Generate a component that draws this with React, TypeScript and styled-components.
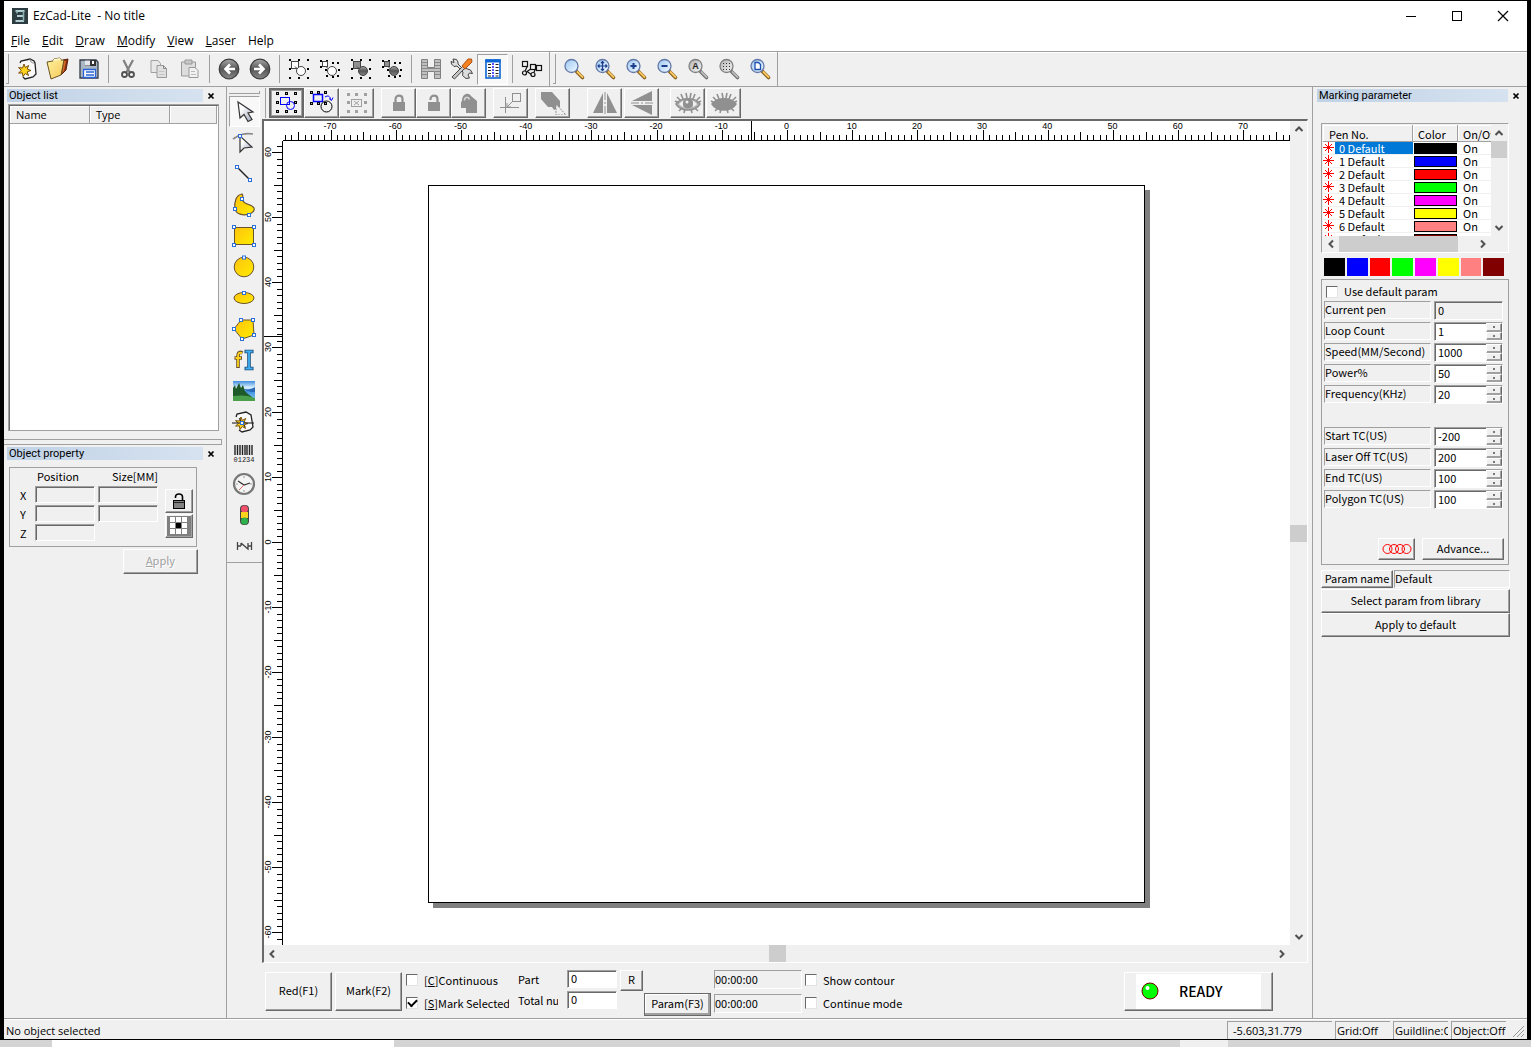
import React from "react";
import styled, { createGlobalStyle, css } from "styled-components";

/* ---------- tokens ---------- */

const face = "#f0f0f0";
const shade = "#a0a0a0";
const dark = "#696969";
const uiFont = `"Open Sans", "Noto Sans", sans-serif`;
const gothic = `"Noto Sans CJK JP", "Liberation Sans", sans-serif`;

const Global = createGlobalStyle`
  * { box-sizing: border-box; }
  body { margin: 0; background: #000; color: #000; font: 11px/14px ${gothic}; }
  button, input { font: inherit; color: inherit; border-radius: 0; margin: 0; }
  button { padding: 0; cursor: default; }
  svg { display: block; }
`;

const raised = css`
  border: 1px solid;
  border-color: #fff ${dark} ${dark} #fff;
  box-shadow: inset -1px -1px 0 ${shade};
  background: ${face};
`;
const sunken = css`
  border: 1px solid;
  border-color: ${shade} #fff #fff ${shade};
`;
const deep = css`
  border: 1px solid;
  border-color: ${shade} #fff #fff ${shade};
  box-shadow: inset 1px 1px 0 ${dark};
`;

/* ---------- window ---------- */

const Screen = styled.div`
  display: flex;
  flex-direction: column;
  height: 100vh;
  min-height: 760px;
`;
const Window = styled.div`
  flex: 1;
  min-height: 0;
  display: flex;
  flex-direction: column;
  margin: 1px 4px;
  background: ${face};
`;
const TitleBar = styled.header`
  display: flex;
  align-items: center;
  height: 29px;
  padding-left: 8px;
  gap: 5px;
  background: #fff;
  font: 12px/16px ${uiFont};
`;
const Title = styled.h1`
  flex: 1;
  margin: 0;
  font: inherit;
  white-space: pre;
`;
const CaptionButtons = styled.div`
  display: flex;
  margin-right: 1px;
`;
const CaptionButton = styled.button`
  width: 46px;
  height: 29px;
  display: grid;
  place-items: center;
  border: 0;
  background: none;
`;
const MenuBar = styled.nav`
  display: flex;
  height: 21px;
  padding-left: 1px;
  background: #fff;
  font: 12px/22px ${uiFont};
`;
const MenuItem = styled.button`
  border: 0;
  background: none;
  padding: 0 6px;
`;
const ToolbarRow = styled.div`
  display: flex;
  align-items: stretch;
  height: 36px;
  border-top: 1px solid ${shade};
  border-bottom: 1px solid ${shade};
  box-shadow: inset 0 1px 0 #fff;
`;
const Grip = styled.span`
  width: 3px;
  margin: 2px 2px;
  border-right: 1px solid ${shade};
  border-bottom: 1px solid ${shade};
`;
const Sep = styled.span`
  width: 1px;
  margin: 3px 3px 3px 4px;
  background: ${shade};
`;
const BandEnd = styled.span`
  width: 1px;
  margin: 0 1px 0 2px;
  background: ${shade};
`;
const Tool = styled.button<{ $on?: boolean }>`
  width: 31px;
  height: 31px;
  align-self: center;
  display: grid;
  place-items: center;
  border: 1px solid transparent;
  background: none;
  ${(p) => p.$on && css`border-color: ${shade} #fff #fff ${shade}; background: #f8f8f8;`}
`;
const Body = styled.div`
  flex: 1;
  min-height: 0;
  display: flex;
`;

/* ---------- docks ---------- */

const LeftDock = styled.aside`
  width: 222px;
  display: flex;
  flex-direction: column;
`;
const RightDock = styled.aside`
  width: 215px;
  border-left: 1px solid ${shade};
`;
const DockTitle = styled.div<{ $left: number }>`
  display: flex;
  align-items: center;
  margin: 2px 0 0 ${(p) => p.$left}px;
  height: 13px;
`;
const DockName = styled.h2<{ $w: number }>`
  width: ${(p) => p.$w}px;
  margin: 0;
  padding-left: 2px;
  background: linear-gradient(90deg, #c0d2e6, #d6e2f0);
  font: 11px/13px Roboto, ${uiFont};
`;
const DockClose = styled.button`
  width: 16px;
  height: 13px;
  display: grid;
  place-items: center;
  border: 0;
  background: none;
`;
const ObjectList = styled.div`
  width: 211px;
  height: 327px;
  margin: 2px 0 0 4px;
  padding: 1px;
  ${deep}
  border-color: ${shade};
  background: #fff;
`;
const Table = styled.table`
  width: 100%;
  table-layout: fixed;
  border-collapse: separate;
  border-spacing: 0;
`;
const HeadCell = styled.th<{ $w?: number; $h: number; $pad: number }>`
  width: ${(p) => (p.$w ? p.$w + "px" : "auto")};
  height: ${(p) => p.$h}px;
  padding: 0 0 0 ${(p) => p.$pad}px;
  font-weight: 400;
  text-align: left;
  white-space: nowrap;
  overflow: hidden;
  background: ${face};
  box-shadow: inset -1px -1px 0 ${shade}, inset 1px 1px 0 #fff;
`;
const UiHead = styled.thead`
  font: 11px/14px ${uiFont};
`;
const Splitter = styled.div`
  height: 6px;
  margin: 8px 4px 0 0;
  border-top: 1px solid ${shade};
  border-bottom: 1px solid ${shade};
  border-right: 1px solid ${shade};
`;
const PropertyBox = styled.div`
  display: flex;
  width: 188px;
  margin: 7px 0 0 5px;
  padding: 2px 3px 5px 10px;
  border: 1px solid ${shade};
`;
const PropertyGrid = styled.div`
  flex: 1;
  display: grid;
  grid-template-columns: 12px 60px 60px;
  grid-template-rows: 14px repeat(3, 17px);
  gap: 2px 3px;
  line-height: 18px;
`;
const HeadText = styled.span<{ $pad: number }>`
  padding-left: ${(p) => p.$pad}px;
  line-height: 12px;
  white-space: nowrap;
`;
const FlatInput = styled.input`
  min-width: 0;
  width: 100%;
  height: 17px;
  padding: 0 3px;
  background: ${face};
  ${deep}
`;
const SideButtons = styled.div`
  display: grid;
  align-content: start;
  gap: 1px;
  padding-top: 19px;
`;
const SquareButton = styled.button`
  width: 28px;
  height: 24px;
  display: grid;
  place-items: center;
  ${raised}
`;
const Push = styled.button<{ $w?: number; $h: number; $default?: boolean }>`
  width: ${(p) => (p.$w ? p.$w + "px" : "100%")};
  height: ${(p) => p.$h}px;
  padding-bottom: 3px;
  display: grid;
  place-items: center;
  white-space: nowrap;
  ${raised}
  ${(p) => p.$default && css`border-color: ${dark}; box-shadow: inset -2px -2px 0 ${shade}, inset 1px 1px 0 #fff;`}
  &:disabled { color: ${shade}; text-shadow: 1px 1px 0 #fff; }
`;
const IconPush = styled(Push)`
  padding-bottom: 0;
`;
const ApplyRow = styled.div`
  display: flex;
  margin: 2px 0 0 119px;
`;

/* ---------- drawing column ---------- */

const ToolColumn = styled.div`
  width: 36px;
  border-left: 1px solid ${shade};
`;
const ToolStack = styled.div`
  display: flex;
  flex-direction: column;
  align-items: center;
  padding: 4px 1px 0 0;
  border-bottom: 1px solid ${shade};
  height: 476px;
`;
const StackGrip = styled.span`
  width: 31px;
  height: 3px;
  margin-bottom: 2px;
  border-bottom: 1px solid ${shade};
  border-right: 1px solid ${shade};
`;
const Center = styled.main`
  flex: 1;
  min-width: 0;
  display: flex;
  flex-direction: column;
`;
const EditBar = styled.div`
  display: flex;
  height: 32px;
  padding: 1px 0 0 3px;
`;
const EditGrip = styled.span`
  width: 2px;
  height: 30px;
  margin-right: 2px;
  border-left: 1px solid ${shade};
`;
const EditGroup = styled.div<{ $gap: number; $after: number }>`
  display: flex;
  gap: ${(p) => p.$gap}px;
  margin-right: ${(p) => p.$after}px;
`;
const EditButton = styled.button<{ $on?: boolean }>`
  width: 35px;
  height: 30px;
  display: grid;
  place-items: center;
  ${raised}
  ${(p) => p.$on && css`border: 2px solid ${dark}; box-shadow: inset 0 0 0 1px ${shade};`}
`;
const View = styled.section`
  flex: 1;
  min-height: 0;
  margin-right: 4px;
  display: grid;
  grid-template-columns: 19px minmax(0, 1fr) 17px;
  grid-template-rows: 20px minmax(0, 1fr) 17px;
  border-style: solid;
  border-width: 2px 1px 1px 2px;
  border-color: ${dark} #fff #fff ${dark};
  background: #fff;
`;
const TopRuler = styled.svg`
  width: 100%;
  height: 20px;
  border-bottom: 1px solid #000;
`;
const SideRuler = styled.svg`
  width: 19px;
  height: 100%;
  border-right: 1px solid #000;
`;
const Canvas = styled.div`
  display: flex;
  align-items: center;
  justify-content: center;
  padding-top: 2px;
  overflow: hidden;
`;
const Sheet = styled.div`
  flex: none;
  width: 717px;
  height: 718px;
  border: 1px solid #000;
  background: #fff;
  box-shadow: 5px 5px 0 #808080;
`;
const Track = styled.div<{ $vertical?: boolean }>`
  display: flex;
  flex-direction: ${(p) => (p.$vertical ? "column" : "row")};
  background: ${face};
`;
const VTrack = styled(Track)`
  grid-column: 3;
  grid-row: 1 / 3;
`;
const HTrack = styled(Track)`
  grid-column: 1 / 3;
`;
const Fill = styled.span<{ $grow?: number }>`
  flex: ${(p) => p.$grow ?? 1};
`;
const Thumb = styled.span<{ $size: number }>`
  flex: none;
  flex-basis: ${(p) => p.$size}px;
  background: #cdcdcd;
`;
const ArrowButton = styled.button`
  flex: none;
  min-width: 16px;
  min-height: 16px;
  display: grid;
  place-items: center;
  border: 0;
  background: none;
`;

/* ---------- marking bar ---------- */

const MarkBar = styled.div`
  display: flex;
  align-items: flex-start;
  height: 55px;
  padding: 7px 39px 0 3px;
`;
const MarkButtons = styled.div`
  display: flex;
  gap: 3px;
  padding-top: 2px;
  margin-right: 4px;
`;
const Checks = styled.div`
  display: grid;
  gap: 3px;
  width: 103px;
  overflow: hidden;
`;
const CheckLabel = styled.label`
  display: flex;
  align-items: center;
  gap: 6px;
  height: 20px;
  white-space: nowrap;
  & > span { padding-bottom: 1px; }
`;
const Box = styled.input.attrs({ type: "checkbox" })`
  appearance: none;
  flex: none;
  width: 12px;
  height: 12px;
  display: grid;
  place-items: center;
  background: #fff;
  border: 1px solid;
  border-color: ${dark} #e3e3e3 #e3e3e3 ${dark};
  &:checked::after {
    content: "";
    width: 7px;
    height: 4px;
    margin-top: -2px;
    border: solid #000;
    border-width: 0 0 2px 2px;
    transform: rotate(-45deg);
  }
`;
const NumberBox = styled.input`
  width: 50px;
  height: 18px;
  padding: 0 3px 2px;
  background: #fff;
  ${deep}
`;
const CountRow = styled.div`
  display: flex;
  gap: 9px;
  height: 19px;
`;
const CountStack = styled.div`
  display: grid;
  gap: 2px;
  width: 99px;
  margin: 0 3px 0 9px;
`;
const ClipLabel = styled.label`
  width: 40px;
  line-height: 18px;
  overflow: hidden;
  white-space: nowrap;
`;
const Stair = styled.div`
  display: flex;
  align-items: flex-start;
  margin-right: 3px;
`;
const ParamSlot = styled.div`
  padding: 23px 0 0 1px;
`;
const Times = styled.div`
  display: grid;
  gap: 5px;
  width: 88px;
  margin-right: 3px;
`;
const TimeBox = styled.output`
  height: 19px;
  line-height: 16px;
  ${sunken}
`;
const ReadyButton = styled.button`
  width: 149px;
  height: 39px;
  margin: 2px 0 0 auto;
  padding: 1px 11px;
  ${raised}
`;
const ReadyFace = styled.span`
  display: flex;
  align-items: center;
  gap: 20px;
  height: 35px;
  padding: 0 0 1px 5px;
  background: #fff;
  font: 500 14px/20px ${gothic};
`;

/* ---------- marking parameters ---------- */

const RightInner = styled.div`
  width: 189px;
  margin-left: 8px;
`;
const PenList = styled.div`
  width: 188px;
  height: 130px;
  margin-top: 21px;
  padding: 1px 1px 0 1px;
  display: grid;
  grid-template-columns: minmax(0, 1fr) 16px;
  grid-template-rows: minmax(0, 1fr) 16px;
  ${sunken}
`;
const PenClip = styled.div`
  overflow: hidden;
  background: #fff;
`;
const PenTable = styled(Table)`
  width: 190px;
`;
const PenCell = styled.td`
  height: 13px;
  padding: 0;
  line-height: 12px;
  border-bottom: 1px solid #f0f0f0;
`;
const PenName = styled.div<{ $on: boolean }>`
  display: flex;
  height: 12px;
  line-height: 12px;
  & > span {
    flex: 1;
    padding-left: 4px;
    white-space: pre;
    ${(p) => p.$on && css`background: #0078d7; color: #fff;`}
  }
`;
const PenColor = styled.div<{ $c: string }>`
  height: 11px;
  margin: 1px 1px 0 1px;
  border: 1px solid #000;
  background: ${(p) => p.$c};
`;
const OnText = styled.div`
  height: 12px;
  padding-left: 5px;
  line-height: 12px;
`;
const Palette = styled.div`
  display: grid;
  grid-template-columns: repeat(8, 1fr);
  gap: 2px;
  width: 180px;
  margin: 5px 0 3px 3px;
`;
const Swatch = styled.button<{ $c: string }>`
  height: 18px;
  border: 0;
  background: ${(p) => p.$c};
`;
const ParamBox = styled.div`
  width: 188px;
  height: 286px;
  padding: 2px 5px 4px 2px;
  display: flex;
  flex-direction: column;
  border: 1px solid ${shade};
  & > ${CheckLabel} { height: 19px; padding-left: 2px; }
`;
const ParamRow = styled.div<{ $gapAfter?: boolean }>`
  display: flex;
  justify-content: space-between;
  height: 21px;
  margin-bottom: ${(p) => (p.$gapAfter ? 21 : 0)}px;
`;
const ParamLabel = styled.label`
  width: 107px;
  height: 18px;
  line-height: 15px;
  white-space: nowrap;
  ${sunken}
`;
const SpinBox = styled.div<{ $flat?: boolean }>`
  display: flex;
  width: 69px;
  height: 19px;
  ${deep}
  background: ${(p) => (p.$flat ? face : "#fff")};
  & > input {
    flex: 1;
    min-width: 0;
    padding: 0 0 2px 3px;
    border: 0;
    background: none;
  }
`;
const SpinButtons = styled.span`
  width: 16px;
  display: grid;
  grid-template-rows: 1fr 1fr;
`;
const SpinButton = styled.button`
  display: grid;
  place-items: center;
  ${raised}
  border-color: #fff ${dark} ${shade} #fff;
`;
const BoxFooter = styled.div`
  display: flex;
  justify-content: flex-end;
  gap: 7px;
  margin: auto -1px 0 0;
`;
const NameRow = styled.div`
  display: flex;
  gap: 1px;
  margin: 5px 0 1px;
`;
const NameBox = styled.output`
  flex: 1;
  height: 18px;
  line-height: 15px;
  ${sunken}
`;

/* ---------- status ---------- */

const Status = styled.footer`
  display: flex;
  align-items: center;
  gap: 3px;
  height: 21px;
  padding: 2px 2px 0 2px;
  border-top: 1px solid ${shade};
  box-shadow: inset 0 1px 0 #fff;
  font: 11px/17px ${uiFont};
`;
const StatusText = styled.span`
  flex: 1;
`;
const StatusCell = styled.span<{ $w: number; $pad: number }>`
  width: ${(p) => p.$w}px;
  height: 18px;
  padding-left: ${(p) => p.$pad}px;
  overflow: hidden;
  white-space: nowrap;
  border-left: 1px solid ${shade};
  border-top: 1px solid ${shade};
`;
const Desktop = styled.div`
  display: flex;
  flex: none;
  justify-content: space-between;
  height: 7px;
  padding: 0 303px 0 52px;
  background: #d4d4d4;
`;
const DesktopPart = styled.span<{ $w: number; $c: string }>`
  width: ${(p) => p.$w}px;
  background: ${(p) => p.$c};
`;

/* ---------- icons ---------- */

type IcoProps = { children?: React.ReactNode; w?: number; h?: number };
const Ico = ({ children, w = 24, h = 24 }: IcoProps) => (
  <svg width={w} height={h} viewBox={`0 0 ${w} ${h}`} fill="none" aria-hidden="true">
    {children}
  </svg>
);

const Gradients = () => (
  <svg width="0" height="0" aria-hidden="true">
    <defs>
      <linearGradient id="gold" x1="0" y1="0" x2="1" y2="1">
        <stop offset="0" stopColor="#ffc20e" />
        <stop offset="1" stopColor="#ffec00" />
      </linearGradient>
      <linearGradient id="lens" x1="0" y1="0" x2="1" y2="1">
        <stop offset="0" stopColor="#9cc8f2" />
        <stop offset="1" stopColor="#f2faff" />
      </linearGradient>
      <linearGradient id="lensGrey" x1="0" y1="0" x2="1" y2="1">
        <stop offset="0" stopColor="#b0b0b0" />
        <stop offset="1" stopColor="#f8f8f8" />
      </linearGradient>
      <linearGradient id="ball" x1="0" y1="0" x2="0" y2="1">
        <stop offset="0" stopColor="#a8a8a8" />
        <stop offset="0.5" stopColor="#555" />
        <stop offset="1" stopColor="#888" />
      </linearGradient>
      <linearGradient id="folder" x1="0" y1="0" x2="1" y2="1">
        <stop offset="0" stopColor="#fff3a0" />
        <stop offset="1" stopColor="#f6c858" />
      </linearGradient>
      <linearGradient id="arrow" x1="0" y1="0" x2="1" y2="1">
        <stop offset="0.3" stopColor="#fff" />
        <stop offset="1" stopColor="#9aa0b8" />
      </linearGradient>
      <linearGradient id="sky" x1="0" y1="0" x2="0" y2="1">
        <stop offset="0" stopColor="#3f8fe0" />
        <stop offset="0.35" stopColor="#e4f6ff" />
        <stop offset="0.5" stopColor="#3f8fe0" />
        <stop offset="1" stopColor="#8cd0f0" />
      </linearGradient>
    </defs>
  </svg>
);

const Dots = ({ at, s = 2, c = "#000" }: { at: number[][]; s?: number; c?: string }) => (
  <g fill={c}>
    {at.map(([x, y]) => (
      <rect key={x + "," + y} x={x} y={y} width={s} height={s} />
    ))}
  </g>
);
const Handle = ({ x, y }: { x: number; y: number }) => (
  <rect x={x - 1.5} y={y - 1.5} width="3" height="3" fill="#fff" stroke="#2a70d8" />
);
const frame = (a: number, m: number, b: number) => [
  [a, a], [m, a], [b, a], [a, m], [b, m], [a, b], [m, b], [b, b],
];

const Star = () => (
  <path
    d="M9 7l1.300 3.400 3.400-1.900-1.500 3.500 3.800 1.500-3.700 1.300 1.200 3.700-3.200-2-2.300 3-.7-3.700-3.700.4 2.700-2.900-2.800-2.700 4 .4z"
    fill="#ffd21c"
    stroke="#6a4200"
    strokeWidth="0.900"
  />
);
const NewIcon = () => (
  <Ico>
    <path d="M6 4l9-2 4 2 1 2 1 11-3 3-8 2-3-4z" fill="#fafafa" />
    <path d="M5 6l1-2 9-2 4 2 1 2 1 11-3 3-8 2-2-2" stroke="#222" strokeWidth="1.300" />
    <path d="M15 2c0 3 2 4 4 4" stroke="#888" />
    <Star />
  </Ico>
);
const OpenIcon = () => (
  <Ico>
    <path d="M17 3l5-1-2 11-5 5z" fill="#8c2f10" stroke="#5c2008" />
    <path d="M18 4l2 0-2 10-2 2z" fill="#d06a28" />
    <path d="M1 5l6-1 1-2 6-1 1 2 3 0-3 15-10 4z" fill="url(#folder)" stroke="#6a5420" />
    <path d="M7 4l1-2 6-1 1 2" fill="#fff8c8" />
  </Ico>
);
const SaveIcon = () => (
  <Ico>
    <path d="M3 3h16l2 2v16H3z" fill="#a9b6c4" stroke="#333c46" strokeWidth="1.300" />
    <path d="M8 3h11v6H8z" fill="#333" />
    <path d="M8 3.500h5v5H8z" fill="#e4e8ee" />
    <path d="M15 4h2v3h-2z" fill="#fff" />
    <path d="M6.500 12.500h12v8h-12z" fill="#fff" stroke="#2864d8" strokeWidth="1.300" />
    <path d="M9 15h8M9 18h8" stroke="#2864d8" strokeWidth="1.500" />
  </Ico>
);
const CutIcon = () => (
  <Ico>
    <path d="M7.500 3l6 12M17 3l-6.500 12" stroke="#808080" strokeWidth="2.200" />
    <circle cx="8.500" cy="17.500" r="2.500" stroke="#505050" strokeWidth="1.800" />
    <circle cx="15.500" cy="17.500" r="2.500" stroke="#505050" strokeWidth="1.800" />
  </Ico>
);
const CopyIcon = () => (
  <Ico>
    <path d="M4 3.500h7l2.500 3v9H4z" fill="#e8e8e8" stroke="#a0a0a0" />
    <path d="M10 8.500h6.500l3 3v9H10z" fill="#e0e0e0" stroke="#999" />
    <path d="M16.500 8.500v3h3" stroke="#888" />
    <path d="M12 14.500h5.500M12 17.500h5.500" stroke="#c4c4c4" />
  </Ico>
);
const PasteIcon = () => (
  <Ico>
    <path d="M3.500 5h14v14h-14z" fill="#ddd" stroke="#999" />
    <path d="M7 3h7v4H7z" fill="#c8c8c8" stroke="#999" />
    <path d="M11 10.500h6l3 3v7h-9z" fill="#f2f2f2" stroke="#999" />
    <path d="M13 14.500h4M13 17.500h5" stroke="#bbb" />
  </Ico>
);
const NavIcon = ({ flip }: { flip?: boolean }) => (
  <Ico>
    <circle cx="12" cy="12" r="9.800" fill="url(#ball)" stroke="#3c3c3c" strokeWidth="1.200" />
    <path
      d={flip ? "M6 12h9M11 7.500l4.500 4.500-4.500 4.500" : "M18 12H9M13 7.500L8.500 12l4.500 4.500"}
      stroke="#fff"
      strokeWidth="2.600"
    />
  </Ico>
);
const PickIcon = ({ filled, small }: { filled?: boolean; small?: boolean }) => {
  const dots = small
    ? [[2, 3], [8, 3], [2, 9], [14, 5], [19, 5], [7, 12], [20, 12], [8, 18], [14, 19], [19, 18]]
    : frame(2, 11, 20);
  return (
    <Ico>
      <Dots at={dots} />
      <rect x="4.500" y="4.500" width={small ? 5 : 7} height={small ? 5 : 7} fill={filled ? "#909090" : "#fff"} stroke="#444" />
      <path d="M8 9.500l3 3" stroke="#444" />
      <circle cx="14" cy="14" r="4.500" fill={filled ? "url(#ball)" : "#fff"} stroke="#444" />
    </Ico>
  );
};
const HatchIcon = () => (
  <Ico>
    <path d="M2.500 2.500h6v8h7v-8h6v19h-6v-7h-7v7h-6z" fill="#c0c0c0" stroke="#808080" />
    <path d="M3 5.500h5M3 8.500h5M3 11.500h18M3 14.500h5M3 17.500h5M16 5.500h5M16 8.500h5M16 14.500h5M16 17.500h5" stroke="#888" />
  </Ico>
);
const ToolsIcon = () => (
  <Ico>
    <path d="M3 2l3.500.5L8 5v2l5 5 3-.5 4.500 1.500 2 3.500-3-.5-1.500 2 1.500 3-3.500.5-3.500-3 .5-3.500-6-6-3 .5L1.500 7 1 4.500l3 1z" fill="#ddd" stroke="#444" />
    <path d="M2 20L12.500 9.500l2 2L4.500 22z" fill="#c8c8c8" stroke="#444" />
    <path d="M12 9l6-7 3.500 0 .5 3-7 7z" fill="#f58220" stroke="#b05010" />
  </Ico>
);
const PanelIcon = () => (
  <Ico>
    <rect x="5" y="3" width="14" height="18" fill="#fff" stroke="#0a64d2" strokeWidth="1.600" />
    <path d="M4.500 4h15" stroke="#0a64d2" strokeWidth="3" />
    <path d="M7 7.500h3M7 10.500h3M7 13.500h3M7 16.500h3M14.500 7.500h3M14.500 10.500h3M14.500 13.500h3M14.500 16.500h3M14.500 19h3M7 19h3" stroke="#222" />
    <path d="M12 6v14" stroke="#2020ff" strokeDasharray="2 1" strokeWidth="1.500" />
  </Ico>
);
const NodesIcon = () => (
  <Ico>
    <g stroke="#111" strokeWidth="1.200">
      <rect x="2.500" y="4.500" width="5" height="5" />
      <rect x="10.500" y="7.500" width="5" height="5" />
      <rect x="16.500" y="8.500" width="5" height="5" />
      <circle cx="4.500" cy="16" r="2" />
      <circle cx="13" cy="17.500" r="2" />
      <path d="M7 10l-2 4M10 12.500l-3 2 3 2 1 1M15 12.500l-1 3" />
    </g>
  </Ico>
);
const Lens = ({ grey, children }: { grey?: boolean; children?: React.ReactNode }) => (
  <Ico>
    <path d="M14.500 14.500l6 6" stroke={grey ? "#707070" : "#8a6020"} strokeWidth="3.600" strokeLinecap="round" />
    <path d="M15.500 15l5 5" stroke={grey ? "#bbb" : "#f8c860"} strokeWidth="1.800" strokeLinecap="round" />
    <circle cx="9.500" cy="9" r="6.500" fill={grey ? "url(#lensGrey)" : "url(#lens)"} stroke={grey ? "#808080" : "#6478a8"} strokeWidth="1.300" />
    {children}
  </Ico>
);

const HandleDots = ({ at }: { at: number[][] }) => (
  <g fill="#aaa" stroke="#000">
    {at.map(([x, y]) => (
      <rect key={x + "," + y} x={x + 0.5} y={y + 0.5} width="2" height="2" />
    ))}
  </g>
);
const SelectIcon = () => (
  <Ico>
    <HandleDots at={frame(1, 10, 19)} />
    <rect x="5.500" y="6.500" width="9" height="7" stroke="#00f" />
    <circle cx="15.500" cy="14.500" r="4" stroke="#00f" />
  </Ico>
);
const RotateIcon = () => (
  <Ico>
    <HandleDots at={[[0, 0], [7, 0], [14, 0], [0, 11], [7, 11], [14, 11]]} />
    <rect x="3.500" y="3.500" width="9" height="7" stroke="#00f" strokeWidth="1.500" />
    <circle cx="16.500" cy="15.500" r="5.500" stroke="#000" />
    <path d="M15 6c3-2 5-1 6 3M19 7.500l2.500 2L23 6.500" stroke="#00f" />
  </Ico>
);
const ClearIcon = () => (
  <Ico>
    <Dots at={frame(2, 10, 19)} s={3} c="#a0a0a0" />
    <rect x="6.500" y="8.500" width="10" height="7" stroke="#a0a0a0" />
    <path d="M9 10l5 4M14 10l-5 4" stroke="#a0a0a0" />
  </Ico>
);
const Padlock = ({ open, many }: { open?: boolean; many?: boolean }) => (
  <Ico>
    {many ? (
      <>
        <path d="M5 10c0-8 7-9 9-5l6 5v12H9v-5H4v-6z" fill="#909090" />
        <path d="M7.500 9.500c0-4 4-4 5-1" stroke="#d8d8d8" strokeWidth="1.500" />
      </>
    ) : (
      <>
        <rect x="6" y="11" width="12" height="9" fill="#909090" />
        <path d={open ? "M8.500 9V8c0-4.500 7-4.500 7 0v3" : "M8.500 12V8c0-4.500 7-4.500 7 0v4"} stroke="#909090" strokeWidth="2.200" />
      </>
    )}
  </Ico>
);
const OriginIcon = () => (
  <Ico w={26}>
    <g stroke="#909090">
      <rect x="14.500" y="2.500" width="8" height="8" />
      <path d="M2 16.500h19M7.500 6v16M14 11l-5 5M9 12v4h4" />
    </g>
  </Ico>
);
const BrushIcon = () => (
  <Ico w={31}>
    <path d="M4 1h11l8 9v6l-6 3-2-3h-4l-7-8z" fill="#909090" />
    <path d="M19 13l10 11H19z" fill={face} stroke="#909090" strokeDasharray="2 1" />
  </Ico>
);
const MirrorIcon = ({ turn }: { turn?: boolean }) => (
  <Ico>
    <g transform={turn ? "rotate(-90 12 12)" : undefined}>
      <path d="M10 2v20H0z" fill="#909090" />
      <path d="M14 2v20h10z" fill="#909090" />
      <path d="M12 1v22" stroke="#909090" strokeDasharray="8 2 2 2" />
    </g>
  </Ico>
);
const EyeIcon = ({ shut }: { shut?: boolean }) => (
  <Ico w={28}>
    <path d="M2 13c5-7 19-7 24 0-5 8-19 8-24 0z" fill={shut ? "#909090" : "#b8b8b8"} stroke="#909090" strokeWidth="1.500" />
    <path d="M3 6l4 4M7 3l2 5M12 2l1 5M17 2l-1 5M21 3l-2 5M26 6l-4 4M1 10l4 2M27 10l-4 2M5 20l3-3M10 22l1-4M18 22l-1-4M24 20l-3-3" stroke="#909090" strokeWidth="1.600" />
    <circle cx="14" cy="12.500" r="5" fill="#909090" />
    {!shut && <path d="M5 13c2-2 3-3 4-3v6c-2-1-3-2-4-3zM23 13c-2-2-3-3-4-3v6c2-1 3-2 4-3z" fill={face} />}
    {!shut && <circle cx="13" cy="11" r="1.500" fill={face} />}
  </Ico>
);

const PointerIcon = () => (
  <Ico>
    <path d="M6 2l2 16 4-3.500 4 7 4-2-4-6.500 5-1z" fill="url(#arrow)" stroke="#333" strokeWidth="1.200" />
  </Ico>
);
const NodeEditIcon = () => (
  <Ico>
    <path d="M1 8c7-5 12-6 20-5" stroke="#888" strokeWidth="1.600" />
    <path d="M8 5v16l4-4 8-1z" fill="url(#arrow)" stroke="#333" strokeWidth="1.200" />
    <Handle x={8} y={5} />
  </Ico>
);
const LineIcon = () => (
  <Ico>
    <path d="M5 5l13 13" stroke="#222" strokeWidth="1.400" />
    <Handle x={5} y={5} />
    <Handle x={18} y={18} />
  </Ico>
);
const CurveIcon = () => (
  <Ico>
    <path d="M10 1C4 2 2 9 3 16c1 5 8 7 14 5 4-1 6-4 5-6-2-4-9-3-11-7-1-2 1-5-1-7z" fill="url(#gold)" stroke="#6a5430" strokeWidth="1.200" />
    <Handle x={10} y={6} />
    <Handle x={3} y={16} />
    <Handle x={17} y={22} />
  </Ico>
);
const RectIcon = () => (
  <Ico>
    <rect x="2.500" y="3.500" width="19" height="17" fill="url(#gold)" stroke="#6a5430" />
    <Handle x={2} y={3} />
    <Handle x={22} y={3} />
    <Handle x={2} y={21} />
    <Handle x={22} y={21} />
  </Ico>
);
const CircleIcon = () => (
  <Ico>
    <circle cx="12" cy="12" r="9.800" fill="url(#gold)" stroke="#6a5430" />
    <Handle x={12} y={2.5} />
  </Ico>
);
const EllipseIcon = () => (
  <Ico>
    <ellipse cx="12" cy="12" rx="10" ry="5.500" fill="url(#gold)" stroke="#6a5430" />
    <Handle x={12} y={7} />
  </Ico>
);
const PolygonIcon = () => (
  <Ico>
    <path d="M2 12l7-9h12l1 15-12 4z" fill="url(#gold)" stroke="#6a5430" />
    <Handle x={2} y={12} />
    <Handle x={9} y={3} />
    <Handle x={21} y={3} />
    <Handle x={22} y={18} />
    <Handle x={10} y={22} />
  </Ico>
);
const TextIcon = () => (
  <Ico>
    <path d="M10.500 5c-4-2-4.500 1-4.500 4v11M2.500 10h7.500" stroke="#6a5430" strokeWidth="3.600" />
    <path d="M10 5.200c-3.500-1.500-4 1-4 3.800v10M3.500 10h5.500" stroke="#ffd21c" strokeWidth="1.800" />
    <path d="M12.500 3.500h9M12.500 20.500h9M17 3v18" stroke="#1f4f80" strokeWidth="3.600" />
    <path d="M13.500 3.500h7M13.500 20.500h7M17 3v18" stroke="#3fb0f0" strokeWidth="1.800" />
  </Ico>
);
const PictureIcon = () => (
  <Ico>
    <rect x="1" y="2" width="22" height="20" fill="url(#sky)" />
    <path d="M1 9l2-3 1 4 3-6 2 5 2-3 2 6 3 3 4 3v3H1z" fill="#1f5a2a" />
    <path d="M1 17c8-1 14-1 22 2v3H1z" fill="#4aa04a" />
    <path d="M12 10c4 1 8 0 11-2v5c-4 0-8 0-11-3z" fill="#2a68b8" />
  </Ico>
);
const VectorIcon = () => (
  <Ico>
    <path d="M6 4l9-2 4 3 2 12-3 3-8 2-4-4z" fill="#fafafa" />
    <path d="M4 7l1-3 9-2 5 3 2 12-3 3-8 2-3-2" stroke="#222" strokeWidth="1.300" />
    <Star />
    <path d="M0 13h22" stroke="#333" strokeWidth="1.200" />
    <path d="M7 8l6 9" stroke="#222" />
    <Handle x={10} y={13} />
  </Ico>
);
const BarcodeIcon = () => (
  <Ico>
    <path d="M3 4v10M5.500 4v10M8 4v10M10.500 4v10M13 4v10M15 4v10M17.500 4v10M20 4v10" stroke="#222" strokeWidth="1.400" />
    <text x="12" y="21" fontSize="7" fontFamily="Liberation Mono, monospace" textAnchor="middle" fill="#222">01234</text>
  </Ico>
);
const TimerIcon = () => (
  <Ico>
    <circle cx="12" cy="12" r="10" fill="#f4f4f4" stroke="#777" strokeWidth="2.200" />
    <path d="M6 9l6 4 6-2" stroke="#333" strokeWidth="1.300" />
    <path d="M12 13l-5 5" stroke="#d66" />
    <path d="M12 4v2M12 18v2M4 12h2M18 12h2" stroke="#999" />
  </Ico>
);
const SignalIcon = () => (
  <Ico>
    <rect x="8" y="2" width="9" height="20" rx="4" fill="#444" />
    <circle cx="12.500" cy="6" r="3.500" fill="#f0506a" />
    <rect x="9" y="9" width="7" height="6" fill="#ffd21c" />
    <circle cx="12.500" cy="18" r="3.500" fill="#2fb04a" />
  </Ico>
);
const EncoderIcon = () => (
  <Ico>
    <path d="M5.500 8v8M5 12h4M9 9v3M9 9l7 6V9M16 12h3M19.500 8v8" stroke="#444" strokeWidth="1.300" />
  </Ico>
);

const CloseGlyph = () => (
  <Ico w={8} h={8}>
    <path d="M1.500 1.500l5 5M6.500 1.500l-5 5" stroke="#000" strokeWidth="1.700" />
  </Ico>
);
const turnOf = { up: 0, right: 90, down: 180, left: 270 };
const Chevron = ({ dir }: { dir: keyof typeof turnOf }) => (
  <Ico w={10} h={10}>
    <path d="M1.500 7L5 3.500 8.500 7" stroke="#505050" strokeWidth="2" transform={`rotate(${turnOf[dir]} 5 5)`} />
  </Ico>
);
const Asterisk = () => (
  <Ico w={12} h={12}>
    <path d="M5.500 0v11M0 5.500h11M2 2l7 7M9 2l-7 7" stroke="#f00" />
  </Ico>
);

/* ---------- rulers ---------- */

const STEP_X = 6.52;
const STEP_Y = 6.5;
const tickLen = (n: number) => (n % 10 === 0 ? 10 : n % 5 === 0 ? 8 : 5);
const range = (a: number, b: number) => Array.from({ length: b - a + 1 }, (_, i) => a + i);

const HorizontalRuler = () => (
  <TopRuler aria-hidden="true">
    <svg x="50%" overflow="visible" shapeRendering="crispEdges">
      {range(-77, 77).map((n) => (
        <rect key={n} x={Math.round(n * STEP_X)} y={19 - tickLen(n)} width="1" height={tickLen(n)} />
      ))}
      {range(-7, 7).map((n) => (
        <text key={n} x={n * 10 * STEP_X} y="8" fontSize="9" fontFamily="Liberation Sans, sans-serif" textAnchor="middle">
          {n * 10}
        </text>
      ))}
      <rect x="-36" y="0" width="1" height="19" />
    </svg>
  </TopRuler>
);
const VerticalRuler = () => (
  <SideRuler aria-hidden="true">
    <svg y="50%" overflow="visible" shapeRendering="crispEdges">
      {range(-61, 61).map((n) => (
        <rect key={n} x={18 - tickLen(n)} y={Math.round(-n * STEP_Y) - 1} width={tickLen(n)} height="1" />
      ))}
      {range(-6, 6).map((n) => (
        <text
          key={n}
          transform={`translate(7 ${-n * 10 * STEP_Y - 1}) rotate(-90)`}
          fontSize="9"
          fontFamily="Liberation Sans, sans-serif"
          textAnchor="middle"
        >
          {n * 10}
        </text>
      ))}
      <rect x="0" y="-207" width="18" height="1" />
    </svg>
  </SideRuler>
);

/* ---------- data ---------- */

const pens = ["#000000", "#0000ff", "#ff0000", "#00ff00", "#ff00ff", "#ffff00", "#ff8080", "#800000"];
const params: [string, string, string, boolean?][] = [
  ["loop", "Loop Count", "1"],
  ["speed", "Speed(MM/Second)", "1000"],
  ["power", "Power%", "50"],
  ["freq", "Frequency(KHz)", "20", true],
  ["start", "Start TC(US)", "-200"],
  ["off", "Laser Off TC(US)", "200"],
  ["end", "End TC(US)", "100"],
  ["poly", "Polygon TC(US)", "100"],
];
const menus = ["File", "Edit", "Draw", "Modify", "View", "Laser"];

type Entry = [string, React.ReactNode, boolean?];
const mainGroups: Entry[][] = [
  [["New", <NewIcon />], ["Open", <OpenIcon />], ["Save", <SaveIcon />]],
  [["Cut", <CutIcon />], ["Copy", <CopyIcon />], ["Paste", <PasteIcon />]],
  [["Undo", <NavIcon />], ["Redo", <NavIcon flip />]],
  [["Combine", <PickIcon />], ["Uncombine", <PickIcon small />], ["Group", <PickIcon filled />], ["Ungroup", <PickIcon filled small />]],
  [["Hatch", <HatchIcon />], ["System parameter", <ToolsIcon />], ["Object list", <PanelIcon />, true]],
  [["Snap", <NodesIcon />]],
];
const zooms: Entry[] = [
  ["Zoom window", <Lens />],
  ["Pan", <Lens><path d="M9.500 4.500v9M5 9h9M8 6l1.500-1.500L11 6M8 12l1.500 1.500L11 12M6.500 7.500L5 9l1.500 1.500M12.500 7.500L14 9l-1.500 1.500" stroke="#1c3c8c" strokeWidth="1.200" /></Lens>],
  ["Zoom in", <Lens><path d="M9.500 6v6M6.500 9h6" stroke="#1c3c8c" strokeWidth="2" /></Lens>],
  ["Zoom out", <Lens><path d="M6.500 9h6" stroke="#1c3c8c" strokeWidth="2" /></Lens>],
  ["Zoom all", <Lens grey><text x="9.500" y="12" fontSize="9" fontWeight="700" fontFamily="Liberation Sans, sans-serif" textAnchor="middle" fill="#222">A</text></Lens>],
  ["Zoom selection", <Lens grey><Dots at={[[6, 6], [9, 6], [12, 6], [6, 9], [9, 9], [12, 9], [6, 12], [9, 12], [12, 12]]} s={1} c="#333" /></Lens>],
  ["Zoom page", <Lens><path d="M7 5.500h3.500l2 2v5H7z" fill="#fff" stroke="#1c50b0" strokeWidth="1.300" /></Lens>],
];
const editGroups: { gap: number; after: number; items: Entry[] }[] = [
  { gap: 0, after: 7, items: [["Pick", <SelectIcon />, true], ["Rotate", <RotateIcon />], ["Clear", <ClearIcon />]] },
  { gap: 0, after: 7, items: [["Lock", <Padlock />], ["Unlock", <Padlock open />], ["Unlock all", <Padlock many />]] },
  { gap: 0, after: 7, items: [["Put to origin", <OriginIcon />]] },
  { gap: 0, after: 17, items: [["Apply brush", <BrushIcon />]] },
  { gap: 2, after: 11, items: [["Mirror horizontally", <MirrorIcon />], ["Mirror vertically", <MirrorIcon turn />]] },
  { gap: 1, after: 0, items: [["Show", <EyeIcon />], ["Hide", <EyeIcon shut />]] },
];
const drawTools: Entry[] = [
  ["Select", <PointerIcon />, true],
  ["Edit nodes", <NodeEditIcon />],
  ["Line", <LineIcon />],
  ["Curve", <CurveIcon />],
  ["Rectangle", <RectIcon />],
  ["Circle", <CircleIcon />],
  ["Ellipse", <EllipseIcon />],
  ["Polygon", <PolygonIcon />],
  ["Text", <TextIcon />],
  ["Picture", <PictureIcon />],
  ["Vector file", <VectorIcon />],
  ["Barcode", <BarcodeIcon />],
  ["Timer", <TimerIcon />],
  ["Signal", <SignalIcon />],
  ["Encoder", <EncoderIcon />],
];

/* ---------- parts ---------- */

const ScrollBar = ({ vertical, before = 1, after = 1, size }: { vertical?: boolean; before?: number; after?: number; size: number }) => (
  <>
    <ArrowButton aria-label="Back"><Chevron dir={vertical ? "up" : "left"} /></ArrowButton>
    <Fill $grow={before} />
    <Thumb $size={size} />
    <Fill $grow={after} />
    <ArrowButton aria-label="Forward"><Chevron dir={vertical ? "down" : "right"} /></ArrowButton>
  </>
);

const LeftPanels = () => (
  <LeftDock>
    <DockTitle $left={3}>
      <DockName $w={196}>Object list</DockName>
      <DockClose aria-label="Close object list"><CloseGlyph /></DockClose>
    </DockTitle>
    <ObjectList>
      <Table>
        <UiHead>
          <tr>
            <HeadCell $w={80} $h={18} $pad={6}>Name</HeadCell>
            <HeadCell $w={80} $h={18} $pad={6}>Type</HeadCell>
            <HeadCell as="td" $h={18} $pad={0} />
          </tr>
        </UiHead>
      </Table>
    </ObjectList>
    <Splitter />
    <DockTitle $left={3}>
      <DockName $w={196}>Object property</DockName>
      <DockClose aria-label="Close object property"><CloseGlyph /></DockClose>
    </DockTitle>
    <PropertyBox>
      <PropertyGrid>
        <span />
        <HeadText $pad={2}>Position</HeadText>
        <HeadText $pad={14}>Size[MM]</HeadText>
        <label htmlFor="px">X</label>
        <FlatInput id="px" disabled />
        <FlatInput aria-label="Width" disabled />
        <label htmlFor="py">Y</label>
        <FlatInput id="py" disabled />
        <FlatInput aria-label="Height" disabled />
        <label htmlFor="pz">Z</label>
        <FlatInput id="pz" disabled />
      </PropertyGrid>
      <SideButtons>
        <SquareButton aria-label="Keep ratio">
          <Ico w={16} h={18}>
            <path d="M4.500 6V5c0-4 7-4 7 0v4" stroke="#000" strokeWidth="1.600" />
            <rect x="2.500" y="8.500" width="11" height="8" fill="#808080" stroke="#000" />
            <path d="M3 10.500h10" stroke="#222" />
          </Ico>
        </SquareButton>
        <SquareButton aria-label="Anchor point">
          <Ico w={24} h={20}>
            <rect width="24" height="20" fill="#808080" />
            {[0, 1, 2].flatMap((r) => [0, 1, 2].map((c) => (
              <rect key={r + "-" + c} x={3 + c * 6} y={1 + r * 6} width="5" height="5" fill={r === 1 && c === 1 ? "#000" : "#fff"} />
            )))}
          </Ico>
        </SquareButton>
      </SideButtons>
    </PropertyBox>
    <ApplyRow>
      <Push $w={75} $h={25} disabled><span><u>A</u>pply</span></Push>
    </ApplyRow>
  </LeftDock>
);

const MarkingPanel = () => (
  <RightDock>
    <DockTitle $left={4}>
      <DockName $w={191}>Marking parameter</DockName>
      <DockClose aria-label="Close marking parameter"><CloseGlyph /></DockClose>
    </DockTitle>
    <RightInner>
      <PenList>
        <PenClip>
          <PenTable>
            <thead>
              <tr>
                <HeadCell $w={90} $h={17} $pad={6}>Pen No.</HeadCell>
                <HeadCell $w={45} $h={17} $pad={5}>Color</HeadCell>
                <HeadCell $h={17} $pad={5}>On/Off</HeadCell>
              </tr>
            </thead>
            <tbody>
              {pens.map((c, i) => (
                <tr key={c}>
                  <PenCell>
                    <PenName $on={i === 0}><Asterisk /><span>{i + " Default"}</span></PenName>
                  </PenCell>
                  <PenCell><PenColor $c={c} /></PenCell>
                  <PenCell><OnText>On</OnText></PenCell>
                </tr>
              ))}
            </tbody>
          </PenTable>
        </PenClip>
        <Track $vertical><ScrollBar vertical size={17} before={0} after={1} /></Track>
        <Track><ScrollBar size={119} before={0} after={1} /></Track>
      </PenList>
      <Palette>
        {pens.map((c, i) => <Swatch key={c} $c={c} aria-label={"Pen " + i} />)}
      </Palette>
      <ParamBox>
        <CheckLabel><Box /><span>Use default param</span></CheckLabel>
        <ParamRow>
          <ParamLabel htmlFor="current">Current pen</ParamLabel>
          <SpinBox $flat><input id="current" defaultValue="0" readOnly /></SpinBox>
        </ParamRow>
        {params.map(([id, name, value, gap]) => (
          <ParamRow key={id} $gapAfter={gap}>
            <ParamLabel htmlFor={id}>{name}</ParamLabel>
            <SpinBox>
              <input id={id} defaultValue={value} />
              <SpinButtons>
                <SpinButton aria-label={name + " up"}><Ico w={4} h={4}><path d="M1 2h2" stroke="#000" /></Ico></SpinButton>
                <SpinButton aria-label={name + " down"}><Ico w={4} h={4}><path d="M1 2h2" stroke="#000" /></Ico></SpinButton>
              </SpinButtons>
            </SpinBox>
          </ParamRow>
        ))}
        <BoxFooter>
          <IconPush $w={37} $h={22} aria-label="Wobble">
            <Ico w={30} h={12}>
              {[5.5, 12, 18, 24.5].map((x) => <circle key={x} cx={x} cy="6" r="4.500" stroke="#f00" />)}
            </Ico>
          </IconPush>
          <Push $w={82} $h={22}>Advance...</Push>
        </BoxFooter>
      </ParamBox>
      <NameRow>
        <Push $w={72} $h={18}>Param name</Push>
        <NameBox>Default</NameBox>
      </NameRow>
      <Push $h={24}>Select param from library</Push>
      <Push $h={24}><span>Apply to <u>d</u>efault</span></Push>
    </RightInner>
  </RightDock>
);

const MarkingBar = () => (
  <MarkBar>
    <MarkButtons>
      <Push $w={67} $h={39}>Red(F1)</Push>
      <Push $w={67} $h={39}>Mark(F2)</Push>
    </MarkButtons>
    <Checks>
      <CheckLabel><Box /><span>[<u>C</u>]Continuous</span></CheckLabel>
      <CheckLabel><Box defaultChecked /><span>[<u>S</u>]Mark Selected</span></CheckLabel>
    </Checks>
    <CountStack>
      <CountRow>
        <ClipLabel htmlFor="part">Part</ClipLabel>
        <NumberBox id="part" defaultValue="0" />
      </CountRow>
      <CountRow>
        <ClipLabel htmlFor="total">Total num</ClipLabel>
        <NumberBox id="total" defaultValue="0" />
      </CountRow>
    </CountStack>
    <Stair>
      <Push $w={23} $h={21}>R</Push>
      <ParamSlot><Push $w={67} $h={23} $default>Param(F3)</Push></ParamSlot>
    </Stair>
    <Times>
      <TimeBox>00:00:00</TimeBox>
      <TimeBox>00:00:00</TimeBox>
    </Times>
    <Checks>
      <CheckLabel><Box /><span>Show contour</span></CheckLabel>
      <CheckLabel><Box /><span>Continue mode</span></CheckLabel>
    </Checks>
    <ReadyButton>
      <ReadyFace>
        <Ico w={18} h={18}>
          <circle cx="9" cy="9" r="8" fill="#0f0" stroke="#700" />
          <circle cx="6.500" cy="6" r="2" fill="#fff" />
        </Ico>
        READY
      </ReadyFace>
    </ReadyButton>
  </MarkBar>
);

export default function App() {
  return (
    <Screen>
      <Global />
      <Gradients />
      <Window>
        <TitleBar>
          <Ico w={16} h={16}>
            <rect width="16" height="16" fill="#2c3c40" />
            <path d="M3.500 3h9M5 8h7M3.500 13h8.500" stroke="#dff" strokeWidth="1.600" />
            <path d="M11.500 3v10M5 3v2.500" stroke="#8ab0b0" strokeWidth="1.600" />
          </Ico>
          <Title>EzCad-Lite  - No title</Title>
          <CaptionButtons>
            <CaptionButton aria-label="Minimize"><Ico w={12} h={12}><path d="M1 6.500h10" stroke="#000" /></Ico></CaptionButton>
            <CaptionButton aria-label="Maximize"><Ico w={12} h={12}><rect x="1.500" y="1.500" width="9" height="9" stroke="#000" /></Ico></CaptionButton>
            <CaptionButton aria-label="Close"><Ico w={12} h={12}><path d="M1 1l10 10M11 1L1 11" stroke="#000" strokeWidth="1.200" /></Ico></CaptionButton>
          </CaptionButtons>
        </TitleBar>
        <MenuBar>
          {menus.map((m) => <MenuItem key={m}><u>{m[0]}</u>{m.slice(1)}</MenuItem>)}
          <MenuItem>Help</MenuItem>
        </MenuBar>
        <ToolbarRow>
          <Grip />
          {mainGroups.map((group, i) => (
            <React.Fragment key={i}>
              {i > 0 && <Sep />}
              {group.map(([name, icon, on]) => <Tool key={name} aria-label={name} $on={on}>{icon}</Tool>)}
            </React.Fragment>
          ))}
          <BandEnd />
          <Grip />
          {zooms.map(([name, icon]) => <Tool key={name} aria-label={name}>{icon}</Tool>)}
          <BandEnd />
        </ToolbarRow>
        <Body>
          <LeftPanels />
          <ToolColumn>
            <ToolStack>
              <StackGrip />
              {drawTools.map(([name, icon, on]) => <Tool key={name} aria-label={name} $on={on}>{icon}</Tool>)}
            </ToolStack>
          </ToolColumn>
          <Center>
            <EditBar>
              <EditGrip />
              {editGroups.map((g, i) => (
                <EditGroup key={i} $gap={g.gap} $after={g.after}>
                  {g.items.map(([name, icon, on]) => <EditButton key={name} aria-label={name} $on={on}>{icon}</EditButton>)}
                </EditGroup>
              ))}
            </EditBar>
            <View>
              <span />
              <HorizontalRuler />
              <VerticalRuler />
              <Canvas><Sheet /></Canvas>
              <VTrack $vertical><ScrollBar vertical size={17} /></VTrack>
              <HTrack><ScrollBar size={17} /></HTrack>
              <Track />
            </View>
            <MarkingBar />
          </Center>
          <MarkingPanel />
        </Body>
        <Status>
          <StatusText>No object selected</StatusText>
          <StatusCell $w={105} $pad={5}>-5.603,31.779</StatusCell>
          <StatusCell $w={55} $pad={1}>Grid:Off</StatusCell>
          <StatusCell $w={55} $pad={1}>Guildline:Off</StatusCell>
          <StatusCell $w={55} $pad={1}>Object:Off</StatusCell>
          <Ico w={16} h={16}>
            <path d="M4 15L15 4M8 15l7-7M12 15l3-3" stroke="#999" />
          </Ico>
        </Status>
      </Window>
      <Desktop>
        <DesktopPart $w={342} $c="#fff" />
        <DesktopPart $w={48} $c="#f0f0f0" />
      </Desktop>
    </Screen>
  );
}
